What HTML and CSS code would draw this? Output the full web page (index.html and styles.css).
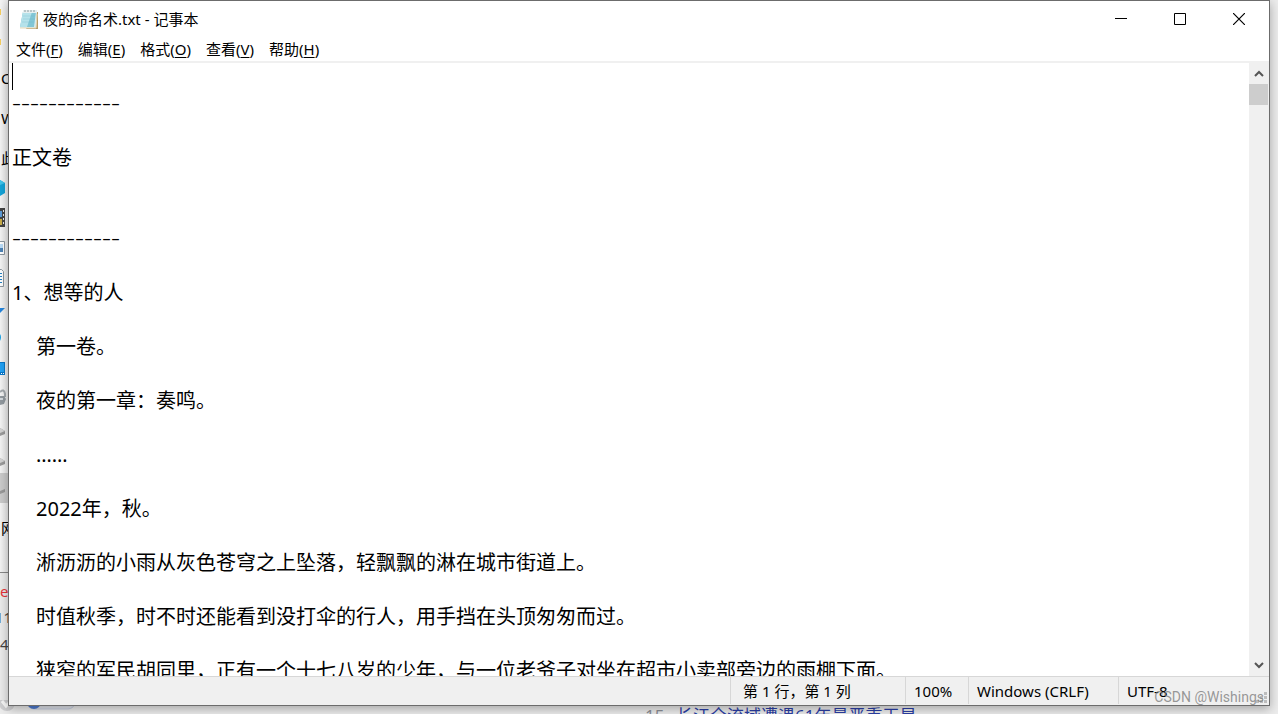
FILE: index.html
```html
<!DOCTYPE html>
<html lang="zh-CN">
<head>
<meta charset="utf-8">
<title>夜的命名术.txt - 记事本</title>
<link rel="stylesheet" href="styles.css">
</head>
<body>
<div class="desktop" aria-hidden="true">
  <div class="explorer"></div>
  <svg class="tree-icons" width="9" height="714" viewBox="0 0 9 714">
    <path d="M0 9h1v6H0zM0 39h1v6H0z" fill="#f6cf60"/>
    <path d="M0 180l5 3v10l-5 3z" fill="#14a4d8"/><path d="M0 180l5 3-5 2z" fill="#41c5ec"/>
    <path d="M0 208h5v19H0z" fill="#444"/><path d="M0 211h2v6H0z" fill="#5b9bd8"/><path d="M0 219h2v6H0z" fill="#c9ad46"/><path d="M3 210h1v2H3zm0 4h1v2H3zm0 4h1v2H3zm0 4h1v2H3z" fill="#eee"/>
    <path d="M-1 241.500h5.500v13H-1z" fill="#fff" stroke="#8d979f"/><path d="M0 244h3v4H0z" fill="#b9dcf8"/><path d="M0 248h3v4H0z" fill="#4d83b6"/>
    <path d="M-1 269.500h2.500l2 2v15H-1z" fill="#fff" stroke="#8d979f"/><path d="M0 273h2v1H0zm0 3h2v1H0zm0 3h2v1H0zm0 3h2v1H0z" fill="#2582c4"/>
    <path d="M0 308h5l-5 5z" fill="#2585dc"/><path d="M0 334q2 3 0 7z" fill="#16a0e4"/>
    <path d="M0 362h5v13H0z" fill="#0878ca"/><path d="M0 363h4v9H0z" fill="#20a1f4"/><path d="M1 373h1v1H1zm2 0h1v1H3z" fill="#fff"/>
    <path d="M0 392q4-4 5 2v3" fill="none" stroke="#a5aaae" stroke-width="2"/><path d="M0 396h4l2 3-2 5-4 1z" fill="#92999f"/><path d="M0 398h3v2H0z" fill="#d5dade"/>
    <path d="M0 428l5 3v3l-5 2z" fill="#9b9b9b"/><path d="M0 428l5 3-5 2z" fill="#d4d4d4"/>
    <path d="M0 458l5 3v3l-5 2z" fill="#9b9b9b"/><path d="M0 458l5 3-5 2z" fill="#d4d4d4"/>
    <path d="M0 473h9v30H0z" fill="#cbcbcb"/><path d="M0 494l5-2v-3l-5 2z" fill="#999"/>
  </svg>
  <span class="scrap scrap-c">C</span>
  <span class="scrap scrap-w">W</span>
  <span class="scrap scrap-pc">此</span>
  <span class="scrap scrap-net">网</span>
  <span class="scrap scrap-red">ec</span>
  <span class="scrap scrap-one">11</span>
  <span class="scrap scrap-four">4·</span>
  <span class="news"><span class="news-number">15.</span><span>长江全流域遭遇61年最严重干旱</span></span>
  <svg class="taskbar-bits" width="90" height="14" viewBox="0 0 90 14"><circle cx="7" cy="3" r="8" fill="#cfcfd1"/><path d="M2 1l4 5 5-5" fill="none" stroke="#f8f8f8" stroke-width="3"/><rect x="27" y="-9" width="48" height="18" rx="7" fill="#e0e3ea" stroke="#c5cde0"/><circle cx="34" cy="2" r="7" fill="#4d7ad0"/></svg>
</div>

<main class="window">
  <header class="titlebar">
    <svg class="app-icon" width="20" height="21" viewBox="0 0 20 21">
      <path d="M17 3h2v17H7z" fill="#b69b68"/>
      <path d="M4 2h14l-1 17H1z" fill="#d9edf1"/>
      <path d="M4 3h13l-2 15H1z" fill="#82c6d5"/>
      <path d="M4 3h9L8 18H1z" fill="#b5e2ea"/>
      <path d="M4 7h12M4 10h12M3 13h12" stroke="#64b2c6" opacity=".25"/>
      <path d="M4 1h14v3H4z" fill="#e6eff0"/>
      <path d="M6 1v2M9 1v2M12 1v2M15 1v2" stroke="#8d9b9e"/>
      <path d="M1 19h16l1-14" fill="none" stroke="#e7d9b7"/>
    </svg>
    <h1 class="title">夜的命名术.txt - 记事本</h1>
    <div class="controls">
      <button class="control" type="button" aria-label="最小化"><svg width="12" height="12" viewBox="0 0 12 12"><path d="M0 5h12v1H0z"/></svg></button>
      <button class="control" type="button" aria-label="最大化"><svg width="12" height="12" viewBox="0 0 12 12"><path d="M.5.5h11v11H.5z" fill="none" stroke="#000"/></svg></button>
      <button class="control" type="button" aria-label="关闭"><svg width="12" height="12" viewBox="0 0 12 12"><path d="M0 0l12 12M12 0L0 12" stroke="#000" stroke-width="1.2"/></svg></button>
    </div>
  </header>
  <nav class="menubar">
    <button class="menu" type="button">文件(<u>F</u>)</button>
    <button class="menu" type="button">编辑(<u>E</u>)</button>
    <button class="menu" type="button">格式(<u>O</u>)</button>
    <button class="menu" type="button">查看(<u>V</u>)</button>
    <button class="menu" type="button">帮助(<u>H</u>)</button>
  </nav>
  <section class="editor">
    <div class="document" role="textbox" aria-multiline="true" aria-label="文本编辑器" contenteditable="true" spellcheck="false">
      <p class="line"><span class="caret"></span></p>
      <p class="line rule">------------</p>
      <p class="line"></p>
      <p class="line">正文卷</p>
      <p class="line"></p>
      <p class="line"></p>
      <p class="line rule">------------</p>
      <p class="line"></p>
      <p class="line">1、想等的人</p>
      <p class="line"></p>
      <p class="line indent">第一卷。</p>
      <p class="line"></p>
      <p class="line indent">夜的第一章：奏鸣。</p>
      <p class="line"></p>
      <p class="line indent">……</p>
      <p class="line"></p>
      <p class="line indent">2022年，秋。</p>
      <p class="line"></p>
      <p class="line indent">淅沥沥的小雨从灰色苍穹之上坠落，轻飘飘的淋在城市街道上。</p>
      <p class="line"></p>
      <p class="line indent">时值秋季，时不时还能看到没打伞的行人，用手挡在头顶匆匆而过。</p>
      <p class="line"></p>
      <p class="line indent">狭窄的军民胡同里，正有一个十七八岁的少年，与一位老爷子对坐在超市小卖部旁边的雨棚下面。</p>
    </div>
    <div class="scrollbar">
      <button class="arrow" type="button" aria-label="向上滚动"><svg width="10" height="7" viewBox="0 0 10 7"><path d="M1 6l4-4 4 4" fill="none" stroke="#555" stroke-width="2"/></svg></button>
      <div class="track"><div class="thumb"></div></div>
      <button class="arrow" type="button" aria-label="向下滚动"><svg width="10" height="7" viewBox="0 0 10 7"><path d="M1 1l4 4 4-4" fill="none" stroke="#555" stroke-width="2"/></svg></button>
    </div>
  </section>
  <footer class="statusbar">
    <span class="cell position">第 1 行，第 1 列</span>
    <span class="cell zoom">100%</span>
    <span class="cell ending">Windows (CRLF)</span>
    <span class="cell encoding">UTF-8</span>
  </footer>
  <svg class="grip" width="11" height="11" viewBox="0 0 11 11"><path d="M8 0h3v3H8zM4 4h3v3H4zM8 4h3v3H8zM0 8h3v3H0zM4 8h3v3H4zM8 8h3v3H8z" fill="#bdbdbd"/></svg>
</main>
<span class="watermark">CSDN @Wishings</span>
</body>
</html>
```
FILE: styles.css
```css
* { box-sizing: border-box; }
body {
  position: relative;
  display: flex;
  height: 100vh;
  margin: 0;
  padding: 0 8px;
  padding-bottom: 8px;
  overflow: hidden;
  background: #ececec;
  color: #000;
  font-family: "Noto Sans", "Noto Sans CJK SC", sans-serif;
  font-size: 15px;
}
button { padding: 0; border: 0; background: none; color: inherit; font: inherit; }

.desktop { position: absolute; inset: 0; overflow: hidden; }
.explorer {
  width: 9px;
  height: 573px;
  border-bottom: 1px solid #888;
  background: linear-gradient(to right, #f5f5f5, #e8e8e8);
}
.tree-icons { position: absolute; left: 0; top: 0; }
.scrap { position: absolute; left: 1px; line-height: 20px; white-space: nowrap; }
.scrap-c { top: 68px; }
.scrap-w { top: 108px; }
.scrap-pc { top: 148px; }
.scrap-net { top: 518px; }
.scrap-red { left: 0; top: 581px; color: #e8343a; }
.scrap-one { left: -5px; top: 607px; color: #444; }
.scrap-four { left: 0; top: 634px; color: #444; }
.news {
  position: absolute;
  left: 645px;
  top: 706px;
  display: flex;
  gap: 7px;
  color: #2c3fa5;
  font-size: 17px;
  line-height: 20px;
  white-space: nowrap;
}
.news-number { color: #8d8f96; }
.taskbar-bits { position: absolute; left: 0; bottom: 0; }

.window {
  position: relative;
  display: flex;
  flex: 1;
  flex-direction: column;
  min-width: 0;
  border: 1px solid #6c6c6c;
  background: #fff;
  box-shadow: 0 3px 10px rgba(0, 0, 0, .3);
}
.titlebar { display: flex; flex: none; align-items: center; height: 36px; padding-left: 10px; }
.title { flex: 1; margin: 0 0 0 4px; font-size: 15px; font-weight: 400; line-height: 22px; }
.controls { display: flex; align-self: stretch; padding-right: 1px; }
.control { display: flex; width: 59px; align-items: center; justify-content: center; }
.menubar {
  display: flex;
  flex: none;
  gap: 15px;
  height: 26px;
  padding-left: 7px;
  border-bottom: 2px solid #f0f0f0;
}
.menu { line-height: 24px; white-space: nowrap; }
.menu u { text-underline-offset: 2px; }

.editor { display: flex; flex: 1; min-height: 0; }
.document {
  flex: 1;
  min-width: 0;
  padding-left: 3px;
  overflow: hidden;
  font-size: 20px;
  line-height: 27px;
  outline: none;
}
.line { height: 27px; margin: 0; white-space: nowrap; }
.indent { padding-left: 24px; }
.rule { font-family: "Open Sans", sans-serif; font-size: 28px; font-weight: 300; line-height: 23px; }
.caret { display: block; width: 1px; height: 27px; background: #000; }
.scrollbar { display: flex; flex: none; flex-direction: column; width: 20px; background: #f0f0f0; }
.arrow { display: flex; height: 21px; align-items: center; justify-content: center; }
.track { flex: 1; }
.thumb { width: 19px; height: 21px; background: #cdcdcd; }

.statusbar {
  display: flex;
  flex: none;
  justify-content: flex-end;
  height: 29px;
  padding-bottom: 1px;
  border-top: 1px solid #d7d7d7;
  background: #f0f0f0;
}
.cell { padding-left: 8px; border-left: 1px solid #d7d7d7; line-height: 28px; white-space: nowrap; }
.position { width: 175px; padding-left: 12px; }
.zoom { width: 63px; }
.ending { width: 150px; }
.encoding { width: 151px; }
.grip { position: absolute; right: 2px; bottom: 2px; }
.watermark {
  position: absolute;
  right: 14px;
  bottom: 8px;
  color: rgba(120, 120, 120, .75);
  font-family: Roboto, sans-serif;
  font-size: 14px;
  line-height: 18px;
}
```
